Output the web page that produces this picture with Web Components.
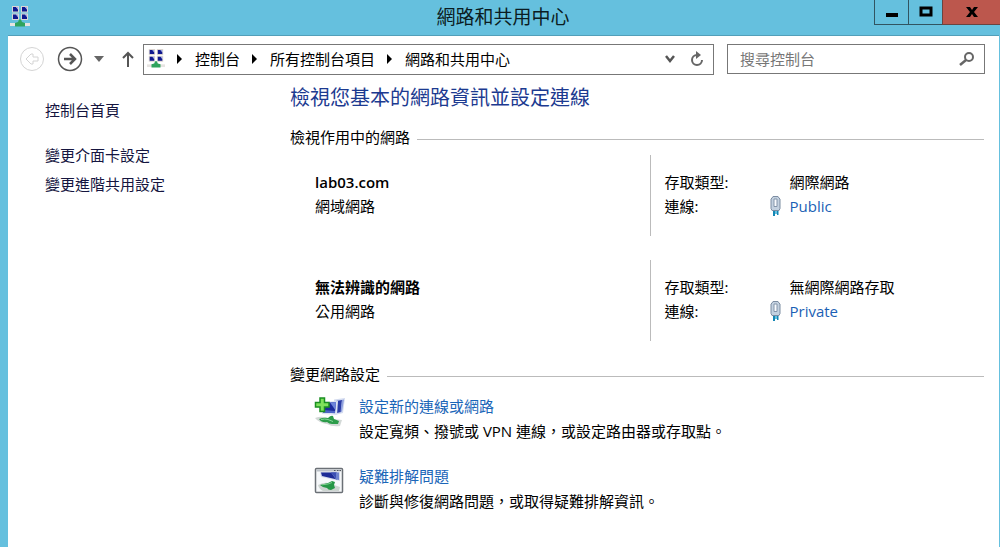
<!DOCTYPE html>
<html lang="zh-Hant">
<head>
<meta charset="utf-8">
<meta name="viewport" content="width=device-width, initial-scale=1">
<title>網路和共用中心</title>
<style>
  html { height: 100%; }
  body {
    margin: 0;
    min-height: 100%;
    display: flex;
    background: #65c0de;
    color: #000;
    font: 15px/24px "Open Sans", "Noto Sans CJK TC", sans-serif;
  }
</style>
</head>
<body>
<app-window heading="網路和共用中心">
  <nav-toolbar slot="toolbar"></nav-toolbar>
  <side-links slot="side"></side-links>
  <page-heading>檢視您基本的網路資訊並設定連線</page-heading>
  <section-group heading="檢視作用中的網路">
    <network-list>
      <network-card name="lab03.com" kind="網域網路" access="網際網路" connection="Public"></network-card>
      <network-card name="無法辨識的網路" kind="公用網路" access="無網際網路存取" connection="Private"></network-card>
    </network-list>
  </section-group>
  <section-group class="tasks" heading="變更網路設定">
    <task-list>
      <task-item heading="設定新的連線或網路">
        <new-icon slot="icon"></new-icon>設定寬頻、撥號或 VPN 連線，或設定路由器或存取點。
      </task-item>
      <task-item heading="疑難排解問題">
        <fix-icon slot="icon"></fix-icon>診斷與修復網路問題，或取得疑難排解資訊。
      </task-item>
    </task-list>
  </section-group>
</app-window>

<script>
const define = (name, render) => customElements.define(name, class extends HTMLElement {
  connectedCallback() {
    if (this.shadowRoot) return;
    this.attachShadow({ mode: 'open' }).innerHTML = render(this);
  }
});

define('network-icon', () => `
<style>:host{display:block;width:20px;height:21px}svg{display:block;width:100%;height:100%}</style>
<svg viewBox="0 0 20 21" aria-hidden="true">
  <path fill="#dcd6d2" d="M2 0h7v6.500H2zM11 0h7v6.500h-7zM2 7.500h7V14H2zM11 7.500h7V14h-7z"/>
  <path fill="#10188f" d="M3 1h3l2 2.500V5.500H3zM12 1h3l2 2.500V5.500h-5zM3 8.500h3l2 2.500v2H3zM12 8.500h3l2 2.500v2h-5z"/>
  <path fill="#93a3ea" d="M6 1h2v2.500zM15 1h2v2.500zM6 8.500h2V11zM15 8.500h2V11z"/>
  <path fill="#e6e3e1" d="M0 17h20v3H0z"/>
  <path fill="#2fa35d" d="M9 13.500h2l1 2.500 3 1v3.500H5V17l3-1z"/>
</svg>`);

define('plug-icon', () => `
<style>:host{display:block;width:12px;height:20px}svg{display:block}</style>
<svg width="12" height="20" viewBox="0 0 12 20" aria-hidden="true">
  <path d="M3 14h2v6H3zM7 14h1.500v5H7z" fill="#1487b5"/><path d="M5 14h2v4H5z" fill="#65bfdd"/>
  <path d="M3 .5h5l1 1.500 1 1v9.500l-1 2H2l-1-2V3l1-1z" fill="#c3d1e0" stroke="#7c8da2"/>
  <path d="M4 3h3v7.500H4z" fill="#fafcff" stroke="#8495aa"/>
</svg>`);

define('new-icon', () => `
<style>:host{display:block;width:32px;height:32px;margin-top:2px}svg{display:block}</style>
<svg width="32" height="32" viewBox="0 0 32 32" aria-hidden="true">
  <path d="M20 3.500L31 2l-2 15-8 2z" fill="#d3dbef"/><path d="M22 5l6-1-1 12-4 1z" fill="#2c3da6"/><path d="M28 4l2-.5-2 12-1.500.5z" fill="#8fa0de"/>
  <path d="M8 6l16-1-1 14-15-1z" fill="#dce3f2"/><path d="M9 7l13-1-1 11-12-.5z" fill="#1d2c9c"/><path d="M16 6.500l6-.5-.7 8z" fill="#6d84da"/>
  <path d="M9 14l12 1v2.200L9 16.500z" fill="#4d66c8"/>
  <path d="M1 22q5-2 9-1l9 2 9 1-2 6q-8 1-13-2Q5 27 1 22z" fill="#d3d9d7"/>
  <path d="M5 23q5-2 9-1 3-3 5-2l1 3 5 2-1 3-6 0q-3 0-5-2-5 1-8-3z" fill="#2c9c4a"/>
  <path d="M7 23.500q4-1 7 0l5 2" fill="none" stroke="#86d598"/>
  <path d="M6 2h4.500v4.500H15V11h-4.500v4.500H6V11H1.500V6.500H6z" fill="#7fe25b" stroke="#1a8f22" stroke-width="1.500"/>
</svg>`);

define('fix-icon', () => `
<style>:host{display:block;width:32px;height:32px;margin-top:2px}svg{display:block}</style>
<svg width="32" height="32" viewBox="0 0 32 32" aria-hidden="true">
  <rect x="1.500" y="2.500" width="27" height="24" rx="1" fill="#f6f8fa" stroke="#6b7076" stroke-width="1.500"/>
  <path d="M2.500 3.500h25v2h-25z" fill="#bcc2c9"/><path d="M20 4h1.500v1H20zM23 4h1.500v1H23zM25.500 4H27v1h-1.500z" fill="#50565c"/>
  <path d="M6 6h20v9L7 11z" fill="#d5dced"/>
  <path d="M7 6.500h16v7L8 10z" fill="#1d2c96"/><path d="M17 6.500h8V14l-3-.5z" fill="#6f84cf"/><path d="M17 6.500h5v6z" fill="#3c50b4"/>
  <path d="M4 19q6-3 10-2l12 4-1 4H9q-4-2-5-6z" fill="#ccd4d0"/>
  <path d="M6 19l8-2 4-2 3 1-1 3 1 3-4 2q-3 0-4-2-4 0-7-3z" fill="#259746"/>
  <path d="M8 18.800l6-.8 4-1.500" fill="none" stroke="#7dcf8f"/>
</svg>`);

define('app-window', el => `
<style>
  :host{display:flex;flex-direction:column;flex:1;min-width:0}
  header{height:36px;display:grid;grid-template-columns:1fr auto 1fr;padding-left:6px}
  network-icon{margin:6px 0 0 4px}
  h1{margin:0;font-size:19px;line-height:35px;font-weight:400;color:#0b1c22}
  .controls{justify-self:end;display:flex;height:25px}
  button{box-sizing:border-box;width:34px;height:25px;padding:0;border:solid #315461;border-width:0 0 1px 1px;background:none;display:grid;place-items:center}
  .close{width:58px;background:#bc574d;border-color:#6b4440}
  .frame{flex:1;display:flex;flex-direction:column;background:#fff;margin:0 1px 0 8px;box-shadow:0 -1px #529fb9}
  .body{display:grid;grid-template-columns:245px minmax(0,1fr);padding:0 15px 32px 37px}
  main{display:flex;flex-direction:column}
</style>
<header>
  <network-icon></network-icon>
  <h1>${el.getAttribute('heading')}</h1>
  <div class="controls">
    <button aria-label="最小化"><svg width="14" height="14"><path d="M1 8h12v4H1z"/></svg></button>
    <button aria-label="最大化"><svg width="14" height="14"><path d="M2 3h10v7H2z" fill="none" stroke="#000" stroke-width="3"/></svg></button>
    <button class="close" aria-label="關閉"><svg width="14" height="14"><path d="M1 2h4l2 3 2-3h4L9 7l4 5H9L7 9l-2 3H1l4-5z"/></svg></button>
  </div>
</header>
<div class="frame">
  <slot name="toolbar"></slot>
  <div class="body"><slot name="side"></slot><main><slot></slot></main></div>
</div>`);

define('nav-toolbar', () => `
<style>
  :host{display:grid;grid-template-columns:123px minmax(0,571fr) 13px minmax(0,258fr);align-items:start;padding:8px 14px 8px 12px}
  button{border:0;padding:0;background:none;display:grid;place-items:center}
  svg{display:block}
  .nav{display:flex;align-items:center;height:30px}
  .back{width:24px;margin-right:13px}.fwd{width:26px}.down{width:32px}.up{width:26px}
  .address{box-sizing:border-box;height:31px;border:1px solid #777;display:flex;align-items:center;padding:0 3px 2px}
  .address network-icon{width:18px}
  ol{display:flex;list-style:none;margin:0;padding:0;flex:1;line-height:24px}
  li{display:flex;align-items:center;white-space:nowrap}
  a{color:#000;text-decoration:none}
  .drop{width:28px}.reload{width:26px}
  .search{grid-column:4;box-sizing:border-box;height:30px;border:1px solid #777;display:flex;align-items:center;padding:0 8px 1px 0}
  input{flex:1;min-width:0;border:0;outline:0;padding:0 0 0 12px;background:none;font:inherit}
  input::placeholder{color:#777;opacity:1}
</style>
<nav class="nav" aria-label="瀏覽">
  <button class="back" aria-label="上一頁"><svg width="24" height="24" fill="none" stroke="#d4d4d4"><circle cx="12" cy="12" r="11.500"/><path d="M6 12l5-5h2v3h5v4h-5v3h-2z"/></svg></button>
  <button class="fwd" aria-label="下一頁"><svg width="26" height="26" fill="none" stroke="#555"><circle cx="13" cy="13" r="11.500" stroke-width="1.500"/><path d="M7 13h11M13 8l5 5-5 5" stroke-width="2.500"/></svg></button>
  <button class="down" aria-label="最近的位置"><svg width="10" height="6"><path d="M0 0h10L5 6z" fill="#666"/></svg></button>
  <button class="up" aria-label="上移"><svg width="12" height="16" fill="none" stroke="#555" stroke-width="2"><path d="M6 16V2M1 7l5-5 5 5"/></svg></button>
</nav>
<div class="address">
  <network-icon></network-icon>
  <ol>${['控制台', '所有控制台項目', '網路和共用中心'].map(t => `<li><svg width="30" height="10" viewBox="0 0 30 10"><path d="M12 0l5 5-5 5z"/></svg><a href="#">${t}</a></li>`).join('')}</ol>
  <button class="drop" aria-label="展開"><svg width="10" height="9" fill="none" stroke="#555" stroke-width="2.500"><path d="M1 2l4 5 4-5"/></svg></button>
  <button class="reload" aria-label="重新整理"><svg width="14" height="16" fill="none" stroke="#666" stroke-width="2"><path d="M7 4a5 5 0 1 0 5 5"/><path d="M6 0l5 4-5 4z" fill="#666" stroke="none"/></svg></button>
</div>
<div class="search">
  <input type="search" aria-label="搜尋控制台" placeholder="搜尋控制台">
  <button aria-label="搜尋"><svg width="20" height="16" fill="none" stroke="#666" stroke-width="2"><circle cx="13" cy="6" r="4"/><path d="M10 9l-6 5" stroke-width="2.500"/></svg></button>
</div>`);

define('side-links', () => `
<style>
  :host{display:flex;flex-direction:column;gap:5px;padding-top:15px;align-items:start}
  a{color:#15153f;text-decoration:none}
  .home{margin-bottom:16px}
</style>
<a class="home" href="#">控制台首頁</a>
<a href="#">變更介面卡設定</a>
<a href="#">變更進階共用設定</a>`);

define('page-heading', () => `
<style>:host{display:block;margin-bottom:14px}h2{margin:0;font-size:20px;line-height:30px;font-weight:400;color:#1c3a90}</style>
<h2><slot></slot></h2>`);

define('section-group', el => `
<style>
  :host{display:block}
  :host(.tasks){margin-top:23px}
  .head{display:flex;align-items:center;gap:7px;margin-bottom:4px}
  h3{margin:0;padding-bottom:4px;font-size:15px;font-weight:400;line-height:20px}
  .rule{flex:1;height:1px;background:#bbb}
</style>
<section><div class="head"><h3>${el.getAttribute('heading')}</h3><div class="rule"></div></div><slot></slot></section>`);

define('network-list', () => `
<style>:host{display:flex;flex-direction:column;gap:24px}</style><slot></slot>`);

define('network-card', el => `
<style>
  :host{display:grid;grid-template-columns:1fr 1fr;padding-left:25px}
  .id{padding-top:15px}
  .name{font-weight:600}
  dl{margin:0;display:grid;grid-template-columns:105px 20px 1fr;align-content:start;align-items:center;padding:15px 0 18px 14px;border-left:1px solid #bbb}
  dt{grid-column:1}dd{margin:0;grid-column:3}
  dd.link{grid-column:2/4;display:grid;grid-template-columns:20px 1fr;align-items:center}
  a{color:#1b5fb5;text-decoration:none}
</style>
<div class="id"><div class="name">${el.getAttribute('name')}</div><div>${el.getAttribute('kind')}</div></div>
<dl>
  <dt>存取類型:</dt><dd>${el.getAttribute('access')}</dd>
  <dt>連線:</dt><dd class="link"><plug-icon></plug-icon><a href="#">${el.getAttribute('connection')}</a></dd>
</dl>`);

define('task-list', () => `
<style>:host{display:flex;flex-direction:column;gap:20px;padding:2px 0 0 24px}</style><slot></slot>`);

define('task-item', el => `
<style>
  :host{display:grid;grid-template-columns:45px 1fr;line-height:25px}
  a{color:#1b66b8;text-decoration:none}
  p{margin:0}
</style>
<slot name="icon"></slot>
<div><a href="#">${el.getAttribute('heading')}</a><p><slot></slot></p></div>`);
</script>
</body>
</html>
